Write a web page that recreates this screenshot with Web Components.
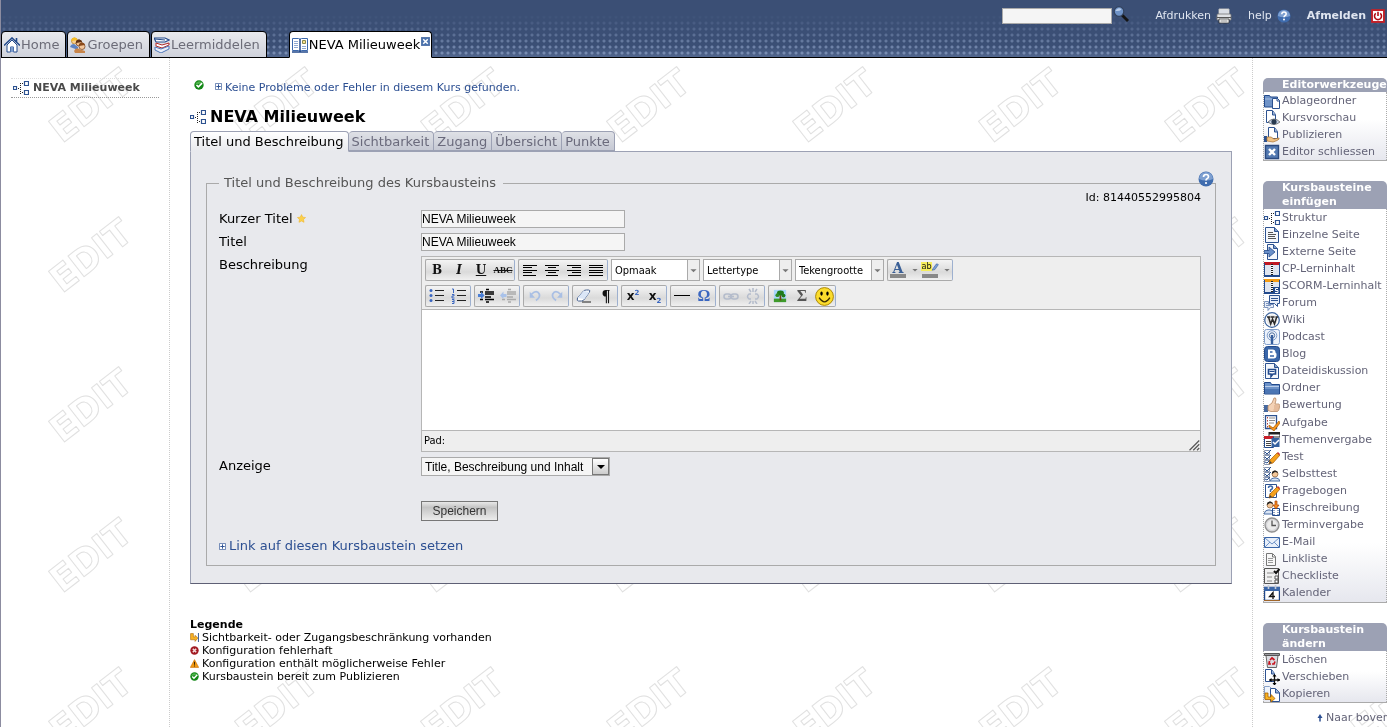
<!DOCTYPE html>
<html lang="de">
<head>
<meta charset="utf-8">
<title>NEVA Milieuweek</title>
<style>
  html { background: #fff; }
  body { margin: 0; border-left: 1px solid #8c8ca0; min-height: 100vh; box-sizing: border-box; overflow-x: hidden;
    font: 11px/14px "DejaVu Sans", Verdana, sans-serif; color: #000; display: flex; flex-direction: column; }
</style>
</head>
<body>
<edit-watermark></edit-watermark>
<page-header>
  <site-tab icon="home">Home</site-tab>
  <site-tab icon="groups">Groepen</site-tab>
  <site-tab icon="books">Leermiddelen</site-tab>
  <site-tab icon="course" active>NEVA Milieuweek</site-tab>
</page-header>
<page-columns>
  <course-tree slot="left">NEVA Milieuweek</course-tree>
  <course-status>Keine Probleme oder Fehler in diesem Kurs gefunden.</course-status>
  <course-title>NEVA Milieuweek</course-title>
  <tab-panel tabs="Titel und Beschreibung|Sichtbarkeit|Zugang|Übersicht|Punkte"><node-form></node-form></tab-panel>
  <status-legend></status-legend>
  <tool-box slot="right" items="clip:Ablageordner|preview:Kursvorschau|publish:Publizieren|close:Editor schliessen">Editorwerkzeuge</tool-box>
  <tool-box slot="right" class="long" items="structure:Struktur|page:Einzelne Seite|extern:Externe Seite|cp:CP-Lerninhalt|scorm:SCORM-Lerninhalt|forum:Forum|wiki:Wiki|podcast:Podcast|blog:Blog|dialog:Dateidiskussion|folder:Ordner|thumb:Bewertung|task:Aufgabe|topic:Themenvergabe|test:Test|selftest:Selbsttest|survey:Fragebogen|enrol:Einschreibung|clock:Terminvergabe|mail:E-Mail|linklist:Linkliste|checklist:Checkliste|calendar:Kalender">Kursbausteine einfügen</tool-box>
  <tool-box slot="right" items="trash:Löschen|move:Verschieben|copy:Kopieren">Kursbaustein ändern</tool-box>
  <to-top slot="right">Naar boven</to-top>
</page-columns>

<script>
const doc = '<path d="M3.5.5h6l4 4v11h-10z" fill="#f4f7fc" stroke="#2d5290"/><path d="M9.5.5v4h4" fill="#7f9cc8" stroke="#2d5290"/>';
const boxes = '<g fill="#fff" stroke="#8795b0"><path d="M.5 1.5h5v4h-5zM.5 6.5h5v4h-5zM.5 11.5h5v4h-5z"/></g><path d="M1 3l2 2 4-4M1 8l2 2 4-4M1 13l2 1 3-3" fill="none" stroke="#28508f"/>';
const pencil = '<path d="M6 11l7-7 3 2-7 8-4 1z" fill="#f5a11c" stroke="#a85a00" stroke-width=".7"/><path d="M13 4l1-1 2 2-1 1z" fill="#c33"/><path d="M5 15l1-3 2 2z" fill="#444"/>';
const book = c => `<path d="M.5 2.5h15v12h-15z" fill="#fff" stroke="#234a8c"/><path d="M1 3h6v11h-6zM9 3h6v11h-6z" fill="#dfe5f0"/><path d="M0 1h16v3h-16z" fill="${c}"/><path d="M.5 2v13M15.5 2v13" stroke="#234a8c"/><path d="M8 3v13" stroke="#222" stroke-width="2" stroke-dasharray="1 1"/><path d="M0 15h16" stroke="#234a8c" stroke-width="2"/>`;
const face = (x, y, h) => `<circle cx="${x}" cy="${y}" r="3" fill="#f3c79a" stroke="#7a4a20" stroke-width=".6"/><path d="M${x - 3} ${y}a3 3 0 0 1 6-1l-3-1z" fill="${h}"/>`;
const blueDisc = '<circle cx="8" cy="8" r="7.5" fill="#3f6cae"/><path d="M1 8a7 7 0 0 1 14 0q-7 3-14 0" fill="#7d9fd0"/>';
const ICONS = {
  home: '<path d="M3 8v7h3.500v-5h3v5H13V8L8 3z" fill="#fff" stroke="#234a8c"/><path d="M0 8.500L8 1l8 7.500M12.500 5V1" fill="none" stroke="#234a8c" stroke-width="1.600"/><path d="M6.500 10h3v5h-3z" fill="#7d9ccd"/>',
  groups: '<circle cx="4.500" cy="4" r="3" fill="#f7cf90" stroke="#b07a1a" stroke-width=".7"/><path d="M1.500 4a3 3 0 0 1 6-1z" fill="#f6bd24"/><path d="M0 10q1-3 4-3l4 3v3z" fill="#5c83c4"/><circle cx="9" cy="6" r="3" fill="#f0bd8a" stroke="#6b3a18" stroke-width=".7"/><path d="M6 6a3 3 0 0 1 6-1z" fill="#5f3214"/><circle cx="12" cy="9.500" r="3" fill="#f4c79c" stroke="#6b3a18" stroke-width=".7"/><path d="M9 9a3 3 0 0 1 6-1z" fill="#8b4a1b"/><path d="M4 14q2-4 5-2l6 2v2H5z" fill="#c8854a"/>',
  books: '<path d="M0 1h11l4 2-4 2H2z" fill="#fff" stroke="#234a8c" stroke-width="1.200"/><path d="M1 2l10 1" stroke="#234a8c"/><path d="M2 6l6 2 7-2v2l-7 3-6-2z" fill="#fff" stroke="#b02a2a"/><path d="M1 10l6 2 8-3v3l-8 4-6-3z" fill="#e8eefa" stroke="#4d76b8"/>',
  course: '<path d="M.5 1.500h6q1.500 0 1.500 1 0-1 1.500-1h6v12h-6q-1.500 0-1.500 1 0-1-1.500-1h-6z" fill="#fff" stroke="#3c68ac"/><path d="M0 15h16M8 2v13" stroke="#234a8c" stroke-width="1.500"/><path d="M2 4.500h4M2 6.500h4M2 8.500h4M2 10.500h4M10 9.500h4M10 11.500h4" stroke="#8fa8d2"/><path d="M10.500 3.500h3v3h-3z" fill="#fae08a" stroke="#8a8a50"/>',
  x: '<path d="M.5.500h15v15H.5z" fill="#4a72ad" stroke="#2d528f"/><path d="M4 4l8 8M12 4l-8 8" stroke="#fff" stroke-width="2.600"/>',
  search: '<path d="M9 9l6 6" stroke="#151515" stroke-width="2.800"/><circle cx="6" cy="5.500" r="4.800" fill="#6f93c7" stroke="#33435e" stroke-width="1.200"/><path d="M2.500 5a3.500 3.500 0 0 1 6-1.500q-2 2-6 1.500" fill="#b9cdea"/>',
  print: '<path d="M3 1h10v6H3z" fill="#fff" stroke="#bbb"/><path d="M4 3h8M4 5h8" stroke="#b5bccb"/><path d="M1 7q0-1 1-1h12q1 0 1 1v5H1z" fill="#dfe1e5" stroke="#777" stroke-width=".8"/><path d="M1 9.500h14" stroke="#555"/><path d="M3 11h10v4H3z" fill="#fff" stroke="#333" stroke-width=".8"/><path d="M4.500 13h7" stroke="#888"/>',
  help: blueDisc + '<path d="M5.500 6q0-2.500 2.500-2.500t2.500 2.200q0 1.300-1.500 2-1 .5-1 1.800" fill="none" stroke="#fff" stroke-width="1.700"/><circle cx="8" cy="12" r="1.100" fill="#fff"/>',
  power: '<path d="M.5.500h15v15H.5z" fill="#fff" stroke="#b00c14"/><path d="M1.500 1.500h13v13h-13z" fill="#fff" stroke="#c5212a" stroke-width="1.500"/><path d="M5.500 5a4 4 0 1 0 5 0M8 3v5" fill="none" stroke="#b00c14" stroke-width="1.800"/>',
  structure: '<path d="M.5 6.500h3v3h-3zM11.500 1.500h4v4h-4zM11.500 10.500h4v4h-4z" fill="#fff" stroke="#2d5290" stroke-width="1.200"/><path d="M7.500 3v11M5 8.500h2M9 3.500h2M9 12.500h2" stroke="#222" stroke-dasharray="1 1"/>',
  plus: '<path d="M1 1h14v14H1z" fill="#fff" stroke="#5c78ab" stroke-width="2"/><path d="M8 3v10M3 8h10" stroke="#2c4f92" stroke-width="2.200"/>',
  ok: '<circle cx="8" cy="8" r="7.500" fill="#128716"/><path d="M2 7a6 6 0 0 1 11-2z" fill="#4fb34b"/><path d="M4 8l3 3 6-6" fill="none" stroke="#fff" stroke-width="2.600"/>',
  error: '<circle cx="8" cy="8" r="7.500" fill="#a21a22"/><path d="M5 5l6 6M11 5l-6 6" stroke="#f3dcdc" stroke-width="2.800"/>',
  warn: '<path d="M8 1l7.500 14H.5z" fill="#f39a12" stroke="#c66a00"/><path d="M8 5v5M8 11.500v2" stroke="#3c2500" stroke-width="1.800"/>',
  access: '<path d="M1 1h5v6h3V4l5 5-5 6v-3H1z" fill="#f8b324" stroke="#a86200"/><path d="M15 0v16" stroke="#234a8c" stroke-width="1.600"/>',
  star: '<path d="M8 1l2.200 4.600 5 .7-3.600 3.500.9 5L8 12.500l-4.500 2.300.9-5L.8 6.300l5-.7z" fill="#fbd14b" stroke="#f0b429"/>',
  clip: '<path d="M.5 2.500h5l1 1.500h7v10H.5z" fill="#6f93c7" stroke="#234a8c"/><path d="M1 6h12" stroke="#a9c0e2"/><path d="M8.500 5.500h5l2 2v8h-7z" fill="#fff" stroke="#2d5290"/><path d="M13 5.500V8h3" fill="none" stroke="#2d5290"/>',
  preview: '<path d="M2.500.500h6l3 4v8h-9z" fill="#fff" stroke="#2d5290"/><path d="M8.500 1v4h3" fill="#9db5da" stroke="#2d5290"/><path d="M4 12q6-6 12 0-6 5-12 0" fill="#c4d2e7" stroke="#666" stroke-width=".8"/><circle cx="10" cy="11.800" r="2.600" fill="#27394f"/>',
  publish: '<path d="M4.500.500h6l3 4v7h-9z" fill="#fff" stroke="#2d5290"/><path d="M10.500 1v4h3" fill="#9db5da" stroke="#2d5290"/><path d="M0 9h3v6H0z" fill="#2d5290"/><path d="M3 10h4l3 2 5-1q1 1-2 2.500L9 15l-6-1z" fill="#f1c384" stroke="#a87030" stroke-width=".7"/>',
  close: '<path d="M1.500 1.500h13v13h-13z" fill="#5379b1" stroke="#2a4a80" stroke-width="1.400"/><path d="M5 5l6 6M11 5l-6 6" stroke="#fff" stroke-width="2.400"/>',
  page: '<path d="M1.500.500h9l4 4v11h-13z" fill="#f4f7fc" stroke="#2d5290"/><path d="M10.500.5v4h4" fill="#7f9cc8" stroke="#2d5290"/><path d="M4 5.500h5M4 7.500h8M4 9.500h7M4 11.500h8" stroke="#555"/>',
  extern: doc + '<path d="M0 6.500h5V3l6 5-6 5V9.500H0z" fill="#6a8fc8" stroke="#234a8c" stroke-width=".8"/>',
  cp: book('#c01822'),
  scorm: book('#f59c14') + '<path d="M9 9h7v7H9z" fill="#234a8c"/><path d="M14 10.500h-2.500v2H14v2h-3" fill="none" stroke="#fff"/>',
  forum: '<path d="M5.500.500h10v8h-2v3l-3-3h-5z" fill="#e9eff9" stroke="#2d5290"/><path d="M7 3.500h7M7 5.500h7" stroke="#2d5290"/><path d="M.5 6.500h4v3h5v3h-3l-2.500 3v-3h-3.500z" fill="#e9eff9" stroke="#7b93bd"/><path d="M2 8.500h3M2 10.500h5" stroke="#7b93bd"/>',
  wiki: '<circle cx="8" cy="8" r="7.300" fill="#fff" stroke="#41679f" stroke-width="1.300"/><circle cx="8" cy="8" r="5.500" fill="#e8e8e8"/><path d="M3 5h3.500M7 5h3.500M4.500 5l2.200 7L8.500 7 10.500 12 12.700 5M11.500 5H14" fill="none" stroke="#2a2a2a" stroke-width="1.500"/>',
  podcast: '<rect x=".5" y=".5" width="15" height="15" rx="2" fill="#eef3fb" stroke="#7f9dca"/><circle cx="8" cy="6.500" r="4.800" fill="none" stroke="#7f9dca"/><circle cx="8" cy="6.500" r="2.700" fill="none" stroke="#50719f"/><path d="M8 6v9" stroke="#345d9d" stroke-width="2.400"/>',
  blog: '<rect x=".5" y=".5" width="15" height="15" rx="3" fill="#3a66a8" stroke="#234a8c"/><path d="M4 3.500h4.500q3 0 3 3 .5 1 1 1v2q0 3-3 3H4z" fill="#fff"/><path d="M6 6h2.500M6 10h4" stroke="#3a66a8" stroke-width="1.600"/>',
  dialog: '<path d="M1.500.500h9l4 4v11h-13z" fill="#f4f7fc" stroke="#2d5290"/><path d="M10.500.5v4h4" fill="#7f9cc8" stroke="#2d5290"/><path d="M4.500 6.500h7v4.500h-2.500l-2 2.500v-2.500h-2.500z" fill="#fff" stroke="#234a8c" stroke-width="1.600"/><path d="M5.500 8.500h5" stroke="#234a8c"/>',
  folder: '<path d="M.5 2.500h6l1 2h8v9.500H.5z" fill="#6c92c8" stroke="#234a8c"/><path d="M1 6.500h14" stroke="#b9cdea"/><path d="M1 9h14v4H1z" fill="#4c76b4"/>',
  thumb: '<path d="M0 8h4v7H0z" fill="#47699f"/><path d="M4 9l4-3 2-5q2-1 2 2l-1 4h4q1 1 .5 3-.5 4-2 4.500H7l-3-1z" fill="#f4d2b5" stroke="#b98a66" stroke-width=".8"/><path d="M10 9h5M10 11h5M9.500 13h4.500" stroke="#c9966f" stroke-width=".7"/>',
  task: '<path d="M1.500.500h11v13h-11z" fill="#fff" stroke="#2d5290" stroke-width="1.300"/><path d="M3.500 2v11" stroke="#b5413a" stroke-dasharray="1.500 1.500"/><path d="M5 3h6M5 5.500h6M5 8h5" stroke="#8a8a8a"/><path d="M5 10l4 3 6-7 1 2-6 8-5-4z" fill="#f8961c" stroke="#a85a00" stroke-width=".7"/>',
  topic: '<path d="M5 0h11v5H5z" fill="#fff" stroke="#222"/><path d="M5 0h11v2.500H5z" fill="#222"/><path d="M.5 4.500h9v11h-9z" fill="#fff" stroke="#234a8c"/><path d="M0 4h9v3H0z" fill="#c8202a"/><path d="M2 9.500h5M2 11.500h5M2 13.500h5" stroke="#444"/><path d="M7.500 6h8v9h-8z" fill="#37629f"/><path d="M9 10l2 2 4-4" fill="none" stroke="#fff" stroke-width="1.500"/>',
  test: boxes + pencil,
  selftest: boxes + '<path d="M6 15q1-3 4-3h2q3 0 4 3z" fill="#dbe6f5" stroke="#476ca5"/>' + face(11, 8, '#222'),
  survey: '<path d="M1.500 1.500h11v13h-11z" fill="#fff" stroke="#2d5290"/><path d="M4.500 5q0-2 2-2t2 2q0 1-2 2v2M6.500 10v2" fill="none" stroke="#3a66a8" stroke-width="1.500"/>' + pencil,
  enrol: '<path d="M0 14q1-4 4-4h2q3 0 4 4z" fill="#dbe6f5" stroke="#476ca5"/>' + face(6, 5, '#222') + '<path d="M8.500 8.500h7v7h-7z" fill="#fff" stroke="#234a8c"/><path d="M10 10v5M14 10v5" stroke="#234a8c" stroke-dasharray="1 1"/><path d="M11 1h2v4h2l-3 4-3-4h2z" fill="#f78c1c" stroke="#a83a00" stroke-width=".7"/>',
  clock: '<circle cx="8" cy="8" r="7" fill="#d5d5d8" stroke="#909090" stroke-width="1.300"/><circle cx="8" cy="8" r="5" fill="#ececec"/><path d="M8 3.500V8.500h4" fill="none" stroke="#555" stroke-width="1.300"/>',
  mail: '<path d="M.5 3.500h15v10H.5z" fill="#e9f0fa" stroke="#3a66a8"/><path d="M1 4l7 6 7-6M1 13l5-5M15 13l-5-5" fill="none" stroke="#6f93c7"/>',
  linklist: '<path d="M2.500 2.500h6l3 3v9h-9z" fill="#f8f8f8" stroke="#777"/><path d="M8.500 3v3h3" fill="none" stroke="#777"/><path d="M4 7.500h5M4 9.500h5M4 11.500h5" stroke="#999"/>',
  checklist: '<path d="M.5.500h14v15H.5z" fill="#f0f0f0" stroke="#555"/><path d="M3 5h7M3 9h5M3 13h5" stroke="#888"/><path d="M11 8h3v3h-3zM11 12h3v3h-3z" fill="#fff" stroke="#555"/><path d="M10 3l2 2 3.500-4" fill="none" stroke="#111" stroke-width="2"/>',
  calendar: '<path d="M.5 2.500h15v13H.5z" fill="#fff" stroke="#1f4688" stroke-width="1.400"/><path d="M0 2h16v4H0z" fill="#3a66a8"/><path d="M4.500 0v4M11.500 0v4" stroke="#c3cbd8" stroke-width="1.600"/><path d="M9 14V7.500L5.500 11.500H11" fill="none" stroke="#111" stroke-width="1.300"/><path d="M0 15.500h16" stroke="#a0662a"/>',
  trash: '<path d="M2 3.500h12l-1.500 12h-9z" fill="#dcdde2" stroke="#666"/><path d="M.5 1.500h15v2H.5z" fill="#9b9ba0" stroke="#555"/><path d="M6 8l2-2 2.500 2M11 9.500l-1 2.500H8M5.500 9L5 12h2" fill="none" stroke="#c8141e" stroke-width="1.700"/>',
  move: '<path d="M1.500.500h6l3 4v8h-9z" fill="#fff" stroke="#2d5290"/><path d="M7.500 1v4h3" fill="#9db5da" stroke="#2d5290"/><path d="M10.500 6v10M5.500 11h10.500" stroke="#111" stroke-width="1.300"/><path d="M10.500 5l2 2.500h-4zM10.500 16.500l2-2.500h-4zM5 11l2.500-2v4zM16 11l-2.500-2v4z"/>',
  copy: '<path d="M.5.500h5l3 3v9h-8z" fill="#eef3fb" stroke="#8aa2c9"/><path d="M6.500 2.500h5l4 4v9h-9z" fill="#fff" stroke="#2d5290"/><path d="M11.500 3v4h4" fill="#9db5da" stroke="#2d5290"/><path d="M1 7h3v4h3V8.500l4 4-4 3.500v-2.500H1z" fill="#f8b324" stroke="#a86200" stroke-width=".8"/>',
  up: '<path d="M8 0l5 8H3z" fill="#2c4f92"/><path d="M8 4v11" stroke="#2c4f92" stroke-width="3"/>',
  left: '<path d="M1 3.500h14M1 5.500h9M1 8.500h14M1 10.500h9M1 13.500h13" stroke="#000"/>',
  center: '<path d="M1 3.500h14M4 5.500h8M1 8.500h14M4 10.500h8M2 13.500h12" stroke="#000"/>',
  right: '<path d="M1 3.500h14M6 5.500h9M1 8.500h14M6 10.500h9M2 13.500h13" stroke="#000"/>',
  justify: '<path d="M1 3.500h14M1 5.500h14M1 8.500h14M1 10.500h14M1 13.500h14" stroke="#000"/>',
  ul: '<path d="M6 2.500h9M6 7.500h9M6 12.500h9" stroke="#222"/><g fill="#3a66c0"><circle cx="2" cy="2.500" r="1.500"/><circle cx="2" cy="7.500" r="1.500"/><circle cx="2" cy="12.500" r="1.500"/></g>',
  ol: '<path d="M6 2.500h9M6 7.500h9M6 12.500h9" stroke="#222"/><path d="M1 1h1.500v4M1 6.500h2v1.500H1v2h2.500M1 11.500h2v4H1M1 13.500h2" fill="none" stroke="#3a66c0"/>',
  indent: '<path d="M8 1.500h3M2 4h3M7 4h9M7 6h9M7 9h6M2 11.500h3M7 11.500h9M8 14h3" stroke="#000" stroke-width="1.300"/><path d="M0 6h3V3.500L6.500 7.500 3 11V9H0z" fill="#4b7fd6"/>',
  outdent: '<path d="M8 1.500h3M7 4h9M7 6h9M7 9h6M2 11.500h3M7 11.500h9M8 14h3" stroke="#aaa" stroke-width="1.300"/><path d="M6.500 6h-3V3.500L0 7.500 3.500 11V9h3z" fill="#a9c2ea"/>',
  undo: '<path d="M4 6q6-6 9 0 1 4-4 7" fill="none" stroke="#a9bfe4" stroke-width="2"/><path d="M2 3v7h6z" fill="#a9bfe4"/>',
  redo: '<path d="M12 6Q6 0 3 6q-1 4 4 7" fill="none" stroke="#a9bfe4" stroke-width="2"/><path d="M14 3v7H8z" fill="#a9bfe4"/>',
  eraser: '<path d="M6 14h9" stroke="#222"/><path d="M1.500 10l6-7q1-1 3-1h2q2 0 1 2l-5 7q-1 2-3 2h-3q-2 0-1-3z" fill="#fff" stroke="#46608f"/><path d="M1.500 10l6-7 6 1-5 7z" fill="#dbe6f7"/>',
  hr: '<path d="M0 7.500h16" stroke="#000"/>',
  link: '<g fill="none" stroke="#b4bccb" stroke-width="1.600"><rect x="1" y="6" width="7" height="5" rx="2.500"/><rect x="8" y="6" width="7" height="5" rx="2.500"/><path d="M5 8.500h6"/></g>',
  unlink: '<g fill="none" stroke="#b4bccb" stroke-width="1.500"><path d="M6 11H4q-3-2.500 0-5h2M10 6h2q3 2.500 0 5h-2M4 1l2 3M8 0v4M12 1l-2 3M4 16l2-3M8 16v-3M12 16l-2-3"/></g>',
  image: '<path d="M1 1h14v14H1z" fill="#a8d6fb"/><path d="M1 11h14v4H1z" fill="#3f9a2b"/><path d="M7.500 7h2v6h-2z" fill="#704214"/><ellipse cx="8.500" cy="4.500" rx="4" ry="2.800" fill="#1f7a1a"/><circle cx="5" cy="7" r="2.200" fill="#2e8b23"/><circle cx="12" cy="7.500" r="2.200" fill="#1f7a1a"/>',
  smiley: '<circle cx="8" cy="8" r="7.500" fill="#fbdc2c" stroke="#a88400" stroke-width=".8"/><path d="M3.500 9q4.500 7 9 0" fill="none" stroke="#3a2c00" stroke-width="1.200"/><ellipse cx="5.500" cy="5.500" rx="1" ry="1.800"/><ellipse cx="10.500" cy="5.500" rx="1" ry="1.800"/>',
  marker: '<path d="M7 10l5-7q2-1 3 1l-5 7-4 1z" fill="#7ba0d8" stroke="#31558f" stroke-width=".8"/>',
  arrow: '<path d="M1 5h14l-7 7z" fill="#777"/>',
  grip: '<path d="M15 2L2 15M15 7l-8 8M15 12l-3 3" stroke="#555" stroke-width="1.600"/>'
};

const define = (name, css, html) => customElements.define(name, class extends HTMLElement {
  connectedCallback() {
    if (this.shadowRoot) return;
    const t = document.createElement('template');
    t.innerHTML = `<style>*{box-sizing:border-box}a{color:inherit;text-decoration:none}${css}</style>` + (typeof html === 'function' ? html(this) : html);
    this.attachShadow({ mode: 'open' }).append(t.content.cloneNode(true));
  }
});
const icon = (n, s = 16) => `<ui-icon name="${n}" size="${s}"></ui-icon>`;

define('ui-icon', ':host{display:inline-block;flex:none;line-height:0}svg{display:block}', el =>
  `<svg aria-hidden="true" width="${el.getAttribute('size')}" height="${el.getAttribute('size')}" viewBox="0 0 16 16">${ICONS[el.getAttribute('name')]}</svg>`);

define('edit-watermark', ':host{position:fixed;inset:0;z-index:-1}svg{display:block;width:100%;height:100%}text{font:bold 36px "DejaVu Sans",sans-serif;fill:#fff;stroke:#e0e0e0;stroke-width:1;stroke-linejoin:round}',
  `<svg aria-hidden="true"><defs><pattern id="p" width="186" height="150" patternUnits="userSpaceOnUse"><text transform="translate(62 144) rotate(-38)">EDIT</text></pattern></defs><rect width="100%" height="100%" fill="url(#p)"/></svg>`);

define('page-header', `
  :host{display:block;position:relative;height:57px;border-bottom:1px solid #000;background:linear-gradient(#3b4f75 46px,#53688f)}
  .dots{position:absolute;inset:14px 0 0;background:radial-gradient(circle at 3px 3px,#7d91b6 1px,transparent 2px) 0 0/6px 6px;-webkit-mask:linear-gradient(transparent,#000);mask:linear-gradient(transparent,#000)}
  nav{position:absolute;left:0;bottom:-1px;display:flex;gap:1px}
  form{position:absolute;right:2px;top:7px;display:flex;align-items:center;color:#dfe5f0;height:17px}
  input{width:110px;height:16px;border:1px solid #aaa;background:#f5f5f5;padding:0 2px;margin:0}
  button{border:0;background:none;padding:0;margin:0 26px 0 1px}
  a{display:flex;align-items:center;gap:5px;margin-right:16px}
  a:last-child{margin:0;font-weight:bold}
`, `<div class="dots"></div><nav><slot></slot></nav><form role="search"><input aria-label="Suche"><button type="button" aria-label="Suchen">${icon('search', 16)}</button><a href="#">Afdrukken ${icon('print', 16)}</a><a href="#">help ${icon('help', 14)}</a><a href="#">Afmelden ${icon('power', 14)}</a></form>`);

define('site-tab', `
  :host{display:flex;position:relative;height:25px;border:1px solid #000;border-radius:4px 4px 0 0;background:linear-gradient(#e9eaee,#cfd2db);color:#6c6c78;font-size:13px}
  :host([active]){margin-left:21px;background:#fff;color:#000;border-bottom-color:#fff}
  a{display:flex;align-items:center;gap:1px;padding:0 6px 0 2px;white-space:nowrap}
  :host([active]) a{padding-right:11px}
  button{position:absolute;top:2px;right:1px;border:0;padding:0;background:none}
`, el => `<a href="#">${icon(el.getAttribute('icon'))}<slot></slot></a>` + (el.hasAttribute('active') ? `<button aria-label="Schliessen">${icon('x', 9)}</button>` : ''));

define('page-columns', `
  :host{flex:1;display:grid;grid-template-columns:169px minmax(0,1fr) 135px}
  .left{border-right:1px dotted #ccc;padding:20px 10px}
  main{padding:22px 20px 0}
  aside{border-left:1px dotted #ccc;padding:20px 0 0 10px;overflow:hidden;display:flex;flex-direction:column;gap:20px}
  ::slotted(to-top){margin-top:-12px}
`, `<nav class="left"><slot name="left"></slot></nav><main><slot></slot></main><aside><slot name="right"></slot></aside>`);

define('course-tree', ':host{display:block;border-top:1px dotted #ddd;border-bottom:1px dotted #999;font-weight:bold;color:#4a4a4a}a{display:flex;align-items:center;gap:4px;height:18px;padding-left:2px}',
  `<a href="#">${icon('structure')}<slot></slot></a>`);

define('course-status', ':host{display:flex;align-items:flex-start;height:16px;color:#2c4f92;padding-left:4px;gap:11px}a{display:flex;gap:3px;line-height:16px}a ui-icon{padding-top:3px}',
  `${icon('ok', 10)}<a href="#">${icon('plus', 7)}<slot></slot></a>`);

define('course-title', ':host{display:block;margin:11px 0 4px}h1{margin:0;font-size:16px;line-height:20px;display:flex;align-items:center;gap:4px}', `<h1>${icon('structure')}<slot></slot></h1>`);

define('tab-panel', `
  :host{display:block;font-size:13px}
  nav{display:flex;position:relative;margin-bottom:-1px}
  a{height:20px;line-height:19px;padding:0 4px 0 3px;border:1px solid #9ca1b4;border-left-width:0;border-radius:4px 4px 0 0;background:linear-gradient(#dfe1e6,#c6c9d4);color:#6a6a7c;white-space:nowrap}
  a[aria-current]{border-left-width:1px;height:21px;border-bottom-color:#e8e9ed;background:linear-gradient(#fff,#e8e9ed);color:#000}
  section{background:#e8e9ed;border:1px solid #9ca1b4;border-bottom-color:#5e6075;padding:23px 15px 17px}
`, el => `<nav>${el.getAttribute('tabs').split('|').map((t, i) => `<a href="#"${i ? '' : ' aria-current="page"'}>${t}</a>`).join('')}</nav><section><slot></slot></section>`);

define('node-form', `
  :host{display:block;position:relative}
  fieldset{margin:0;border:1px solid #aaa;padding:0 14px 11px 12px;min-width:0}
  legend{padding:0 7px 0 5px;line-height:16px;color:#555}
  .id{font-size:11px;line-height:14px;text-align:right;margin-bottom:5px}
  .help{position:absolute;top:-4px;right:2px;border:0;padding:0;background:none}
  .rows{display:grid;grid-template-columns:202px minmax(0,1fr);row-gap:5px;align-items:start}
  .rows>label,.rows>span{line-height:17px}
  input,select,.save{font:12px "Liberation Sans",Arial,sans-serif;margin:0;border:1px solid #aaa;background:#f5f5f5;color:#000;border-radius:0;justify-self:start}
  input{width:204px;height:18px;padding:0}
  select{appearance:none;width:189px;height:19px;padding:0 20px 0 3px}
  .sel{position:relative;justify-self:start;display:flex}
  .sel i{position:absolute;right:1px;top:1px;width:17px;height:17px;border:1px solid #777;background:linear-gradient(#fff,#ccc);pointer-events:none;display:grid;place-items:center}
  .sel i::after{content:"";border:4px solid transparent;border-top-color:#000;border-bottom:0}
  .save{grid-column:2;width:77px;height:20px;margin-top:20px;border-color:#777;background:linear-gradient(#e8e8e8,#c4c4c4 30%,#ececec);color:#333;padding:0}
  .more{display:flex;align-items:center;gap:3px;color:#2c4f92;margin-top:17px;line-height:16px}
`, `<fieldset><legend>Titel und Beschreibung des Kursbausteins</legend>
  <div class="id">Id: 81440552995804</div>
  <div class="rows">
    <label for="s">Kurzer Titel ${icon('star', 9)}</label><input id="s" value="NEVA Milieuweek">
    <label for="t">Titel</label><input id="t" value="NEVA Milieuweek">
    <span>Beschreibung</span><rich-editor></rich-editor>
    <label for="a">Anzeige</label><span class="sel"><select id="a"><option>Title, Beschreibung und Inhalt</option></select><i></i></span>
    <button class="save" type="button">Speichern</button>
  </div>
  <a class="more" href="#">${icon('plus', 7)}Link auf diesen Kursbaustein setzen</a>
  </fieldset><button class="help" aria-label="Hilfe">${icon('help', 16)}</button>`);

const btn = (label, body) => `<button type="button" aria-label="${label}">${body}</button>`;
const ib = (n, s = 16) => btn(n, icon(n, s));
const grp = (...b) => `<div class="g">${b.join('')}</div>`;
const combo = t => `<span class="c"><select aria-label="${t}"><option>${t}</option></select><i>${icon('arrow', 7)}</i></span>`;
define('rich-editor', `
  :host{display:block;border:1px solid #b6b6b6;background:#eee;font:11px/14px "DejaVu Sans Condensed","DejaVu Sans",sans-serif}
  .bar{padding:2px 3px;border-bottom:1px solid #b6b6b6;display:grid;gap:4px}
  .r{display:flex;gap:3px}
  .g{display:flex;border:1px solid #aaa;border-right-color:#9db0cf;border-radius:2px;background:linear-gradient(#f4f4f4,#dadada 60%,#f0f0f0);height:22px}
  button{width:22px;height:20px;border:0;background:none;padding:0;margin:0;display:flex;align-items:center;justify-content:center;font:bold 12px "DejaVu Serif",serif;color:#111}
  .c{position:relative;display:flex;width:89px}
  select{appearance:none;width:100%;height:22px;border:1px solid #aaa;border-radius:0;background:#fff;padding:2px 14px 0 3px;margin:0;font:inherit;color:#000}
  .c i{position:absolute;right:1px;top:1px;bottom:1px;width:12px;border-left:1px solid #aaa;background:#eee;display:grid;place-items:center;pointer-events:none}
  .wide{width:32px;gap:6px}
  .sw{display:flex;position:relative;width:16px;height:16px;border-bottom:4px solid #888;justify-content:center;line-height:12px}
  .col{color:#3a5f96;font-size:14px}
  .hl{font:9px/9px "DejaVu Sans Condensed",sans-serif;background:#f6ee5c;justify-self:start;align-self:start}
  .sw ui-icon{margin-left:-4px}
  sup,sub{font-size:7px;line-height:0;color:#3a66c0}
  .s{font:bold 12px "DejaVu Sans",sans-serif}
  s{font:bold 9px "Liberation Serif",serif;text-decoration:line-through}
  .big{font:bold 16px "Liberation Serif",serif}
  .blue{color:#3a66c0}.grey{color:#555}
  textarea{display:block;width:100%;height:120px;border:0;background:#fff;resize:none;margin:0}
  .path{display:flex;justify-content:space-between;align-items:end;height:21px;border-top:1px solid #b6b6b6;line-height:20px;padding-left:2px}
`, `<div class="bar"><div class="r">${grp(btn('Fett', '<b>B</b>'), btn('Kursiv', '<i>I</i>'), btn('Unterstrichen', '<u>U</u>'), btn('Durchgestrichen', '<s>ABC</s>'))}${grp(ib('left'), ib('center'), ib('right'), ib('justify'))}
  ${combo('Opmaak')}${combo('Lettertype')}${combo('Tekengrootte')}
  <div class="g"><button class="wide" aria-label="Textfarbe"><span class="sw col">A</span>${icon('arrow', 6)}</button><button class="wide" aria-label="Hintergrundfarbe"><span class="sw"><span class="hl">ab</span>${icon('marker', 11)}</span>${icon('arrow', 6)}</button></div></div>
  <div class="r">${grp(ib('ul'), ib('ol'))}${grp(ib('indent'), ib('outdent'))}${grp(ib('undo', 14), ib('redo', 14))}${grp(ib('eraser'), btn('Absatz', '<span class="big">¶</span>'))}${grp(btn('Hochgestellt', '<span class="s">x<sup>2</sup></span>'), btn('Tiefgestellt', '<span class="s">x<sub>2</sub></span>'))}${grp(ib('hr'), btn('Sonderzeichen', '<span class="big blue">Ω</span>'))}${grp(ib('link'), ib('unlink'))}${grp(ib('image', 14), btn('Formel', '<span class="big grey">Σ</span>'), ib('smiley', 19))}</div></div>
  <textarea aria-label="Beschreibung"></textarea><div class="path"><span>Pad:</span>${icon('grip', 12)}</div>`);

define('status-legend', ':host{display:block;margin-top:34px;line-height:13px}h2{font-size:11px;margin:0;line-height:13px}ul{list-style:none;margin:0;padding:0}li{display:flex;align-items:center;gap:3px}',
  `<h2>Legende</h2><ul><li>${icon('access', 9)}Sichtbarkeit- oder Zugangsbeschränkung vorhanden</li><li>${icon('error', 9)}Konfiguration fehlerhaft</li><li>${icon('warn', 9)}Konfiguration enthält möglicherweise Fehler</li><li>${icon('ok', 9)}Kursbaustein bereit zum Publizieren</li></ul>`);

define('tool-box', `
  :host{display:block;overflow:hidden;border-bottom:1px solid #aaa;color:#646478}
  h3{margin:0;padding:0 0 0 19px;font-size:11px;line-height:14px;background:#9ca1b4;color:#fff;border-radius:5px 5px 0 0}
  ul{list-style:none;margin:0;padding:0;border:1px dotted #aaa;border-width:0 1px;background:linear-gradient(#fff 40%,#e6e7ee);display:grid;grid-auto-rows:minmax(17px,1fr)}
  :host(.long) ul{min-height:393px;background:linear-gradient(#fff 85%,#e6e7ee)}
  a{display:flex;align-items:center;gap:2px;height:17px;white-space:nowrap}
`, el => `<h3><slot></slot></h3><ul>${el.getAttribute('items').split('|').map(s => s.split(':')).map(([i, t]) => `<li><a href="#">${icon(i)}${t}</a></li>`).join('')}</ul>`);

define('to-top', ':host{display:block;color:#646478}a{display:flex;align-items:center;gap:2px;white-space:nowrap;padding-left:53px}', `<a href="#">${icon('up', 8)}<slot></slot></a>`);
</script>
</body>
</html>
